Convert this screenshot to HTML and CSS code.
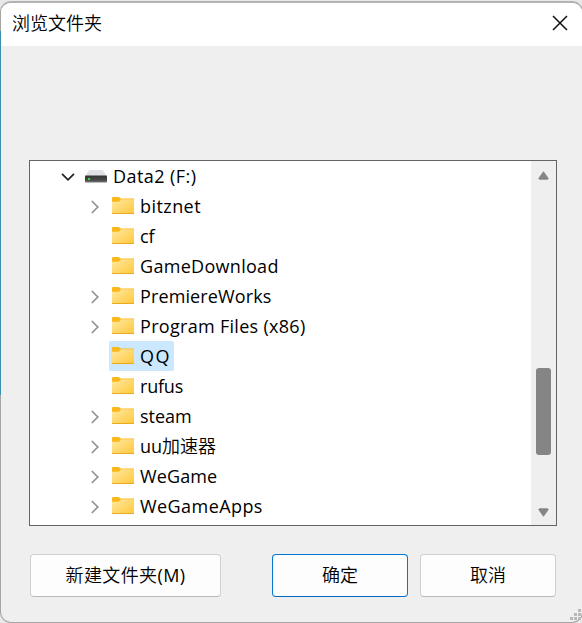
FILE: index.html
```html
<!DOCTYPE html>
<html lang="zh-CN">
<head>
<meta charset="utf-8">
<title>浏览文件夹</title>
<link rel="stylesheet" href="styles.css">
</head>
<body>
<svg class="defs" width="0" height="0">
  <defs>
    <linearGradient id="face" x1="0" y1="0" x2="1" y2="1">
      <stop offset="0" stop-color="#ffe9a2"/><stop offset="1" stop-color="#ffc83a"/>
    </linearGradient>
    <linearGradient id="drive" x1="0" y1="0" x2="0" y2="1">
      <stop offset="0" stop-color="#333"/><stop offset=".65" stop-color="#484848"/><stop offset="1" stop-color="#777"/>
    </linearGradient>
    <symbol id="folder" viewBox="0 0 22 18">
      <path d="M0 1Q0 0 1 0H6.4Q7 0 7.6.6L8.6 1.4H22V6H0Z" fill="#fbb81c"/>
      <path d="M0 4.7H7L9 2.2H22V17H0Z" fill="url(#face)"/>
      <path d="M0 16H22V16.4Q22 17 21.3 17H.7Q0 17 0 16.4Z" fill="#eaa91e"/>
    </symbol>
    <symbol id="closed" viewBox="0 0 8 14"><path d="M.8 1L6.8 7L.8 13" fill="none" stroke="#929292" stroke-width="1.7"/></symbol>
  </defs>
</svg>
<div class="window">
  <header class="titlebar">
    <span class="title">浏览文件夹</span>
    <svg class="close" width="16" height="16" viewBox="0 0 16 16"><path d="M1 1L15 15M15 1L1 15" stroke="#111" stroke-width="1.5"/></svg>
  </header>
  <main class="tree-box">
    <ul class="tree">
      <li class="row drive">
        <span class="toggle"><svg width="14" height="8" viewBox="0 0 14 8"><path d="M1 .8L7 6.8L13 .8" fill="none" stroke="#222" stroke-width="1.7"/></svg></span>
        <span class="item"><svg class="disk" width="22" height="13" viewBox="0 0 22 13"><path d="M4.5 0H17.5L22 6H0Z" fill="#dfe1e4"/><rect y="5.5" width="22" height="7" rx=".7" fill="url(#drive)"/><rect x="3" y="8" width="2" height="2" fill="#2ee02e"/></svg><span class="name wide">Data2 (F:)</span></span>
      </li>
      <li class="row"><span class="toggle"><svg width="8" height="14"><use href="#closed"/></svg></span><span class="item"><svg class="folder" width="22" height="18"><use href="#folder"/></svg><span class="name wide">bitznet</span></span></li>
      <li class="row"><span class="toggle"></span><span class="item"><svg class="folder" width="22" height="18"><use href="#folder"/></svg><span class="name">cf</span></span></li>
      <li class="row"><span class="toggle"></span><span class="item"><svg class="folder" width="22" height="18"><use href="#folder"/></svg><span class="name roomy">GameDownload</span></span></li>
      <li class="row"><span class="toggle"><svg width="8" height="14"><use href="#closed"/></svg></span><span class="item"><svg class="folder" width="22" height="18"><use href="#folder"/></svg><span class="name snug">PremiereWorks</span></span></li>
      <li class="row"><span class="toggle"><svg width="8" height="14"><use href="#closed"/></svg></span><span class="item"><svg class="folder" width="22" height="18"><use href="#folder"/></svg><span class="name roomy">Program Files (x86)</span></span></li>
      <li class="row"><span class="toggle"></span><span class="item selected"><svg class="folder" width="22" height="18"><use href="#folder"/></svg><span class="name caps">QQ</span></span></li>
      <li class="row"><span class="toggle"></span><span class="item"><svg class="folder" width="22" height="18"><use href="#folder"/></svg><span class="name tight">rufus</span></span></li>
      <li class="row"><span class="toggle"><svg width="8" height="14"><use href="#closed"/></svg></span><span class="item"><svg class="folder" width="22" height="18"><use href="#folder"/></svg><span class="name">steam</span></span></li>
      <li class="row"><span class="toggle"><svg width="8" height="14"><use href="#closed"/></svg></span><span class="item"><svg class="folder" width="22" height="18"><use href="#folder"/></svg><span class="name">uu<span class="cjk">加速器</span></span></span></li>
      <li class="row"><span class="toggle"><svg width="8" height="14"><use href="#closed"/></svg></span><span class="item"><svg class="folder" width="22" height="18"><use href="#folder"/></svg><span class="name snug">WeGame</span></span></li>
      <li class="row"><span class="toggle"><svg width="8" height="14"><use href="#closed"/></svg></span><span class="item"><svg class="folder" width="22" height="18"><use href="#folder"/></svg><span class="name wide">WeGameApps</span></span></li>
    </ul>
    <div class="scrollbar">
      <svg width="11" height="9" viewBox="0 0 12 9" preserveAspectRatio="none"><path d="M6 .8L11 7.3Q11.3 8.2 10.3 8.2H1.7Q.7 8.2 1 7.3Z" fill="#858585" stroke="#858585" stroke-linejoin="round"/></svg>
      <div class="thumb"></div>
      <svg width="11" height="9" viewBox="0 0 12 9" preserveAspectRatio="none"><path d="M6 8.2L11 1.7Q11.3.8 10.3.8H1.7Q.7.8 1 1.7Z" fill="#858585" stroke="#858585" stroke-linejoin="round"/></svg>
    </div>
  </main>
  <footer class="actions">
    <button class="btn new"><span class="cjk">新建文件夹</span>(M)</button>
    <button class="btn ok"><span class="cjk">确定</span></button>
    <button class="btn cancel"><span class="cjk">取消</span></button>
  </footer>
</div>
<div class="edge"></div>
<svg class="grip" width="12" height="12" viewBox="0 0 12 12" fill="#b9b9b9"><path d="M8 0h3v3h-3zM4 4h3v3h-3zM8 4h3v3h-3zM0 8h3v3h-3zM4 8h3v3h-3zM8 8h3v3h-3z"/></svg>
</body>
</html>
```
FILE: styles.css
```css
* { box-sizing: border-box; }
body {
  margin: 0;
  height: 623px;
  overflow: hidden;
  background: #e9e9e9;
  color: #000;
  font: 18px/30px "Open Sans", "Noto Sans CJK SC", sans-serif;
}
.defs { position: absolute; }
.title, .cjk { font-weight: 350; }
.window {
  width: 583px;
  height: 622px;
  margin-top: 1px;
  border: 1px solid #a6a6a6;
  border-top: 2px solid #b3b3b3;
  border-radius: 11px;
  background: #efefef;
  overflow: hidden;
}
.titlebar {
  display: flex;
  justify-content: space-between;
  height: 43px;
  padding: 5px 14px 0 11px;
  background: #fff;
}
.close { margin-top: 7px; }
.tree-box {
  display: flex;
  justify-content: space-between;
  width: 528px;
  height: 366px;
  margin: 114px 0 0 28px;
  border: 1px solid #646464;
  background: #fff;
}
.tree { margin: 0; padding: 0; list-style: none; }
.row { display: flex; height: 30px; padding-left: 51px; }
.row.drive { padding-left: 24px; }
.toggle {
  display: flex;
  align-items: center;
  justify-content: center;
  width: 28px;
  padding: 2px 1px 0 0;
}
.item {
  display: flex;
  height: 30px;
  padding: 0 3px;
  border-radius: 2px;
  white-space: nowrap;
}
.selected { background: #cce8ff; }
.wide { letter-spacing: .43px; }
.roomy { letter-spacing: .3px; }
.snug { letter-spacing: .12px; }
.tight { letter-spacing: -.2px; }
.caps { letter-spacing: 1.4px; }
.folder { margin: 6px 6px 0 0; }
.disk { margin: 9px 6px 0 0; }
.scrollbar {
  display: flex;
  flex-direction: column;
  align-items: center;
  width: 25px;
  padding: 10px 0 8px;
  background: #efefef;
}
.thumb {
  width: 15px;
  height: 87px;
  margin: 188px 0 53px;
  border-radius: 3px;
  background: #858585;
}
.actions { display: flex; margin: 28px 0 0 29px; }
.btn {
  height: 43px;
  padding: 0 0 2px;
  border: 1px solid #d0d0d0;
  border-bottom-color: #b9b9b9;
  border-radius: 4px;
  background: #fdfdfd;
  color: #000;
  font: inherit;
}
.new { width: 191px; margin-right: 51px; letter-spacing: .4px; }
.ok { width: 136px; margin-right: 12px; border-color: #0078d4; border-bottom-color: #0067c0; }
.cancel { width: 136px; }
.edge {
  position: absolute;
  left: 0;
  top: 31px;
  width: 1px;
  height: 364px;
  background: #3a8fb0;
}
.grip { position: absolute; left: 570px; top: 609px; }
```
